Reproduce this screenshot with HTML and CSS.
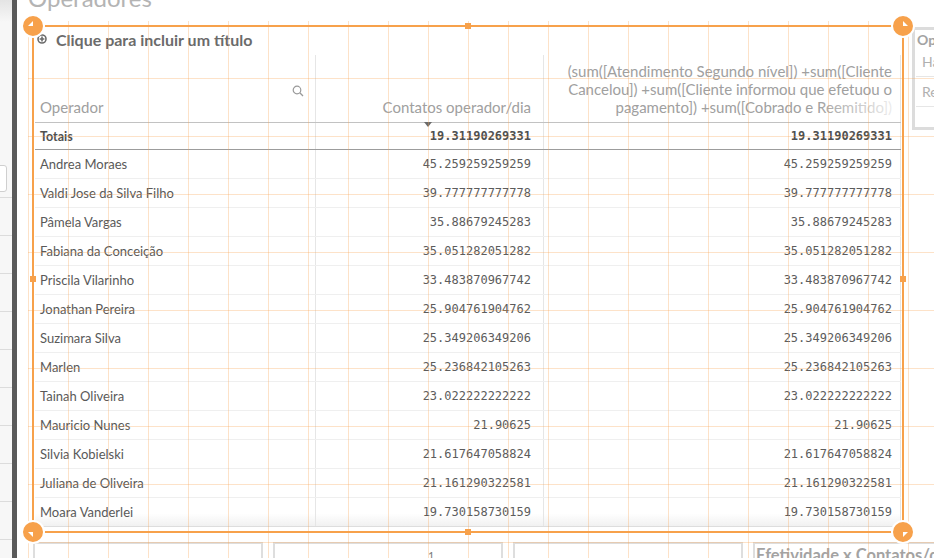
FILE: index.html
```html
<!DOCTYPE html>
<html lang="pt-BR">

<head>
    <meta charset="UTF-8">
    <meta name="viewport" content="width=device-width, initial-scale=1.0">
    <title>Operadores</title>
    <link rel="stylesheet" href="styles.css">
</head>

<body>
    <div class="app">
        <!-- Assets panel (mostly hidden) -->
        <aside class="side-panel">
            <div class="side-top"></div>
            <div class="side-search"></div>
            <div class="side-list">
                <div class="side-item"></div>
                <div class="side-item"></div>
                <div class="side-item"></div>
                <div class="side-item"></div>
                <div class="side-item"></div>
                <div class="side-item"></div>
                <div class="side-item"></div>
                <div class="side-item"></div>
                <div class="side-item"></div>
                <div class="side-item"></div>
            </div>
        </aside>
        <div class="side-divider"></div>

        <main class="sheet">
            <div class="sheet-title"><span>Operadores</span></div>

            <div class="sheet-row">
                <section class="object selected">
                    <span class="handle corner tl"><svg viewBox="0 0 20 20"><polygon points="5,10 10,5 10,10" /></svg></span>
                    <span class="handle corner tr"><svg viewBox="0 0 20 20"><polygon points="10,5 15,10 10,10" /></svg></span>
                    <span class="handle corner bl"><svg viewBox="0 0 20 20"><polygon points="5,10 10,15 10,10" /></svg></span>
                    <span class="handle corner br"><svg viewBox="0 0 20 20"><polygon points="10,10 15,10 10,15" /></svg></span>
                    <span class="handle mid top"></span>
                    <span class="handle mid left"></span>
                    <span class="handle mid right"></span>
                    <span class="handle mid bottom"></span>

                    <div class="object-title">
                        <svg class="add-icon" width="10" height="10" viewBox="0 0 10 10">
                            <circle cx="5" cy="5" r="4" fill="none" stroke="#6b6b6b" stroke-width="1.6" />
                            <path d="M5 2.6v4.8M2.6 5h4.8" stroke="#6b6b6b" stroke-width="1.6" />
                        </svg>
                        <span>Clique para incluir um título</span>
                    </div>

                    <div class="pivot">
                        <div class="row head">
                            <div class="cell dim">
                                Operador
                                <svg class="search-icon" width="12" height="12" viewBox="0 0 12 12">
                                    <circle cx="5" cy="5" r="3.8" fill="none" stroke="#999" stroke-width="1.2" />
                                    <path d="M7.8 7.8l3.2 3.2" stroke="#999" stroke-width="1.3" />
                                </svg>
                            </div>
                            <div class="cell num mid-col sorted">Contatos operador/dia</div>
                            <div class="cell num last-col expr">(sum([Atendimento Segundo nível]) +sum([Cliente<br>Cancelou]) +sum([Cliente informou que efetuou o<br>pagamento]) +sum([Cobrado e Reemitido])</div>
                        </div>

                        <div class="row totals">
                            <div class="cell dim">Totais</div>
                            <div class="cell num mid-col">19.31190269331</div>
                            <div class="cell num last-col">19.31190269331</div>
                        </div>

                        <div class="row">
                            <div class="cell dim">Andrea Moraes</div>
                            <div class="cell num mid-col">45.259259259259</div>
                            <div class="cell num last-col">45.259259259259</div>
                        </div>
                        <div class="row">
                            <div class="cell dim">Valdi Jose da Silva Filho</div>
                            <div class="cell num mid-col">39.777777777778</div>
                            <div class="cell num last-col">39.777777777778</div>
                        </div>
                        <div class="row">
                            <div class="cell dim">Pâmela Vargas</div>
                            <div class="cell num mid-col">35.88679245283</div>
                            <div class="cell num last-col">35.88679245283</div>
                        </div>
                        <div class="row">
                            <div class="cell dim">Fabiana da Conceição</div>
                            <div class="cell num mid-col">35.051282051282</div>
                            <div class="cell num last-col">35.051282051282</div>
                        </div>
                        <div class="row">
                            <div class="cell dim">Priscila Vilarinho</div>
                            <div class="cell num mid-col">33.483870967742</div>
                            <div class="cell num last-col">33.483870967742</div>
                        </div>
                        <div class="row">
                            <div class="cell dim">Jonathan Pereira</div>
                            <div class="cell num mid-col">25.904761904762</div>
                            <div class="cell num last-col">25.904761904762</div>
                        </div>
                        <div class="row">
                            <div class="cell dim">Suzimara Silva</div>
                            <div class="cell num mid-col">25.349206349206</div>
                            <div class="cell num last-col">25.349206349206</div>
                        </div>
                        <div class="row">
                            <div class="cell dim">Marlen</div>
                            <div class="cell num mid-col">25.236842105263</div>
                            <div class="cell num last-col">25.236842105263</div>
                        </div>
                        <div class="row">
                            <div class="cell dim">Tainah Oliveira</div>
                            <div class="cell num mid-col">23.022222222222</div>
                            <div class="cell num last-col">23.022222222222</div>
                        </div>
                        <div class="row">
                            <div class="cell dim">Mauricio Nunes</div>
                            <div class="cell num mid-col">21.90625</div>
                            <div class="cell num last-col">21.90625</div>
                        </div>
                        <div class="row">
                            <div class="cell dim">Silvia Kobielski</div>
                            <div class="cell num mid-col">21.617647058824</div>
                            <div class="cell num last-col">21.617647058824</div>
                        </div>
                        <div class="row">
                            <div class="cell dim">Juliana de Oliveira</div>
                            <div class="cell num mid-col">21.161290322581</div>
                            <div class="cell num last-col">21.161290322581</div>
                        </div>
                        <div class="row fade">
                            <div class="cell dim">Moara Vanderlei</div>
                            <div class="cell num mid-col">19.730158730159</div>
                            <div class="cell num last-col">19.730158730159</div>
                        </div>
                    </div>
                </section>

                <!-- Filter pane peeking in on the right -->
                <section class="filter-pane">
                    <div class="filter-title">Op</div>
                    <div class="filter-item">Ha</div>
                    <div class="filter-item">Re</div>
                </section>
            </div>

            <div class="bottom-row">
                <div class="tile"></div>
                <div class="tile axis"><span>1</span></div>
                <div class="tile"></div>
                <div class="tile titled"><span>Efetividade x Contatos/dia</span></div>
            </div>
        </main>

        <!-- Edit mode snapping grid -->
        <div class="grid-overlay"></div>
    </div>
</body>

</html>
```

FILE: styles.css
```css
* {
    box-sizing: border-box;
}

body {
    margin: 0;
    padding: 0;
    width: 934px;
    height: 558px;
    overflow: hidden;
    background: #fff;
    font-family: Lato, "Noto Sans", sans-serif;
    color: #595959;
}

.app {
    position: relative;
    display: flex;
    width: 934px;
    height: 558px;
    overflow: hidden;
}

/* Left assets panel */
.side-panel {
    width: 12px;
    flex-shrink: 0;
    background: #f7f7f7;
    overflow: hidden;
}

.side-top {
    height: 22px;
    background: linear-gradient(180deg, #e4e4e4, #f7f7f7);
}

.side-search {
    margin: 143px 0 0 -20px;
    width: 27px;
    height: 27px;
    border: 1px solid #cfcfcf;
    border-radius: 3px;
    background: #fff;
}

.side-list {
    margin-top: 5px;
}

.side-item {
    height: 38px;
    border-top: 1px solid #dcdcdc;
}

.side-divider {
    width: 5px;
    flex-shrink: 0;
    background: #5a5a5a;
}

/* Sheet */
.sheet {
    flex: 1;
    min-width: 0;
}

.sheet-title {
    height: 25px;
    overflow: hidden;
    padding-left: 11px;
}

.sheet-title span {
    display: block;
    margin-top: -14px;
    font-size: 24px;
    line-height: 24px;
    color: #b4b4b4;
    white-space: nowrap;
}

.sheet-row {
    display: flex;
    align-items: flex-start;
}

/* Selected table object */
.object {
    position: relative;
    margin-left: 15px;
    width: 872px;
    height: 508px;
    flex-shrink: 0;
    border: 2px solid #f7a14b;
}

.handle {
    position: absolute;
    z-index: 10;
}

.handle.corner {
    width: 24px;
    height: 24px;
    border-radius: 50%;
    background: #f7a14b;
    border: 2px solid #fff;
}

.handle.corner svg {
    display: block;
    width: 20px;
    height: 20px;
    fill: #fff;
}

.handle.tl {
    left: -13px;
    top: -13px;
}

.handle.tr {
    right: -13px;
    top: -13px;
}

.handle.bl {
    left: -13px;
    bottom: -13px;
}

.handle.br {
    right: -13px;
    bottom: -13px;
}

.handle.mid {
    width: 6px;
    height: 6px;
    background: #f7a14b;
}

.handle.top {
    top: -4px;
    left: 50%;
    margin-left: -3px;
}

.handle.bottom {
    bottom: -4px;
    left: 50%;
    margin-left: -3px;
}

.handle.left {
    left: -4px;
    top: 50%;
    margin-top: -3px;
}

.handle.right {
    right: -4px;
    top: 50%;
    margin-top: -3px;
}

.object-title {
    display: flex;
    align-items: center;
    gap: 9px;
    height: 24px;
    padding-left: 3px;
    font-size: 16px;
    font-weight: bold;
    color: #6b6b6b;
}

.add-icon {
    flex-shrink: 0;
}

/* Straight table */
.pivot {
    margin: 4px 0 0 1px;
    width: 866px;
}

.row {
    display: grid;
    grid-template-columns: 281px 228px 357px;
    height: 29px;
    border-bottom: 1px solid #efefef;
    font-size: 13px;
}

.cell {
    display: flex;
    align-items: center;
    white-space: nowrap;
    overflow: hidden;
}

.cell.dim {
    padding-left: 5px;
    border-right: 1px solid #e6e6e6;
}

.cell.num {
    justify-content: flex-end;
    font-family: "DejaVu Sans Mono", "Liberation Mono", monospace;
    font-size: 12px;
    color: #5c5c5c;
}

.cell.mid-col {
    padding-right: 12px;
    border-right: 1px solid #e6e6e6;
}

.cell.last-col {
    padding-right: 8px;
    border-right: 1px solid #e6e6e6;
}

.row.head {
    height: 68px;
    border-bottom: 1px solid #c2c2c2;
}

.row.head .cell {
    position: relative;
    align-items: flex-end;
    padding-bottom: 6px;
    font-family: Lato, "Noto Sans", sans-serif;
    font-size: 15px;
    line-height: 18px;
    color: #a0a0a0;
    overflow: visible;
}

.row.head .expr {
    text-align: right;
}

.row.head .expr::after {
    content: "";
    position: absolute;
    right: 8px;
    bottom: 6px;
    width: 75px;
    height: 18px;
    background: linear-gradient(90deg, rgba(255, 255, 255, 0), rgba(255, 255, 255, 0.8));
}

.search-icon {
    position: absolute;
    right: 11px;
    top: 30px;
}

.sorted::after {
    content: "";
    position: absolute;
    left: 108px;
    top: 67px;
    border-left: 4px solid transparent;
    border-right: 4px solid transparent;
    border-top: 5px solid #6b6b6b;
}

.row.totals {
    height: 27px;
    border-bottom: 1px solid #9c9c9c;
}

.row.totals .cell {
    font-weight: bold;
    color: #505050;
}

.row.totals .cell.dim {
    font-size: 12.5px;
}

.row.fade {
    border-bottom-color: #dddddd;
    background: linear-gradient(180deg, #fff 55%, #f1f1f1);
}

/* Filter pane at the right edge */
.filter-pane {
    margin: 2px 0 0 8px;
    width: 80px;
    height: 103px;
    flex-shrink: 0;
    border: 3px solid #dcdcdc;
    overflow: hidden;
}

.filter-title {
    height: 17px;
    padding: 1px 0 0 2px;
    font-size: 14px;
    font-weight: bold;
    color: #a3a3a3;
}

.filter-item {
    margin-left: 1px;
    height: 30px;
    line-height: 30px;
    padding-left: 6px;
    border-bottom: 1px solid #e6e6e6;
    font-size: 14px;
    color: #b0b0b0;
}

/* Objects below the table */
.bottom-row {
    display: flex;
    gap: 10px;
    margin: 9px 0 0 16px;
}

.tile {
    width: 230px;
    height: 40px;
    flex-shrink: 0;
    border: 2px solid #dedede;
    border-bottom: none;
}

.tile.axis span {
    display: block;
    padding: 5px 0 0 153px;
    font-size: 11px;
    color: #7a7a7a;
}

.tile.titled {
    border-right: none;
}

.tile.titled span {
    display: block;
    padding: 1px 0 0 1px;
    font-size: 16.5px;
    font-weight: bold;
    color: #a3a3a3;
    white-space: nowrap;
}

/* Snapping grid drawn over the sheet */
.grid-overlay {
    position: absolute;
    left: 28px;
    top: 21px;
    right: 0;
    bottom: 0;
    pointer-events: none;
    z-index: 5;
    background-image:
        linear-gradient(90deg, rgba(248, 160, 75, 0.3) 1px, transparent 1px),
        linear-gradient(180deg, transparent 57px, rgba(248, 160, 75, 0.3) 57px, rgba(248, 160, 75, 0.3) 58px, transparent 58px);
    background-size: 40px 100%, 100% 58px;
}
```
